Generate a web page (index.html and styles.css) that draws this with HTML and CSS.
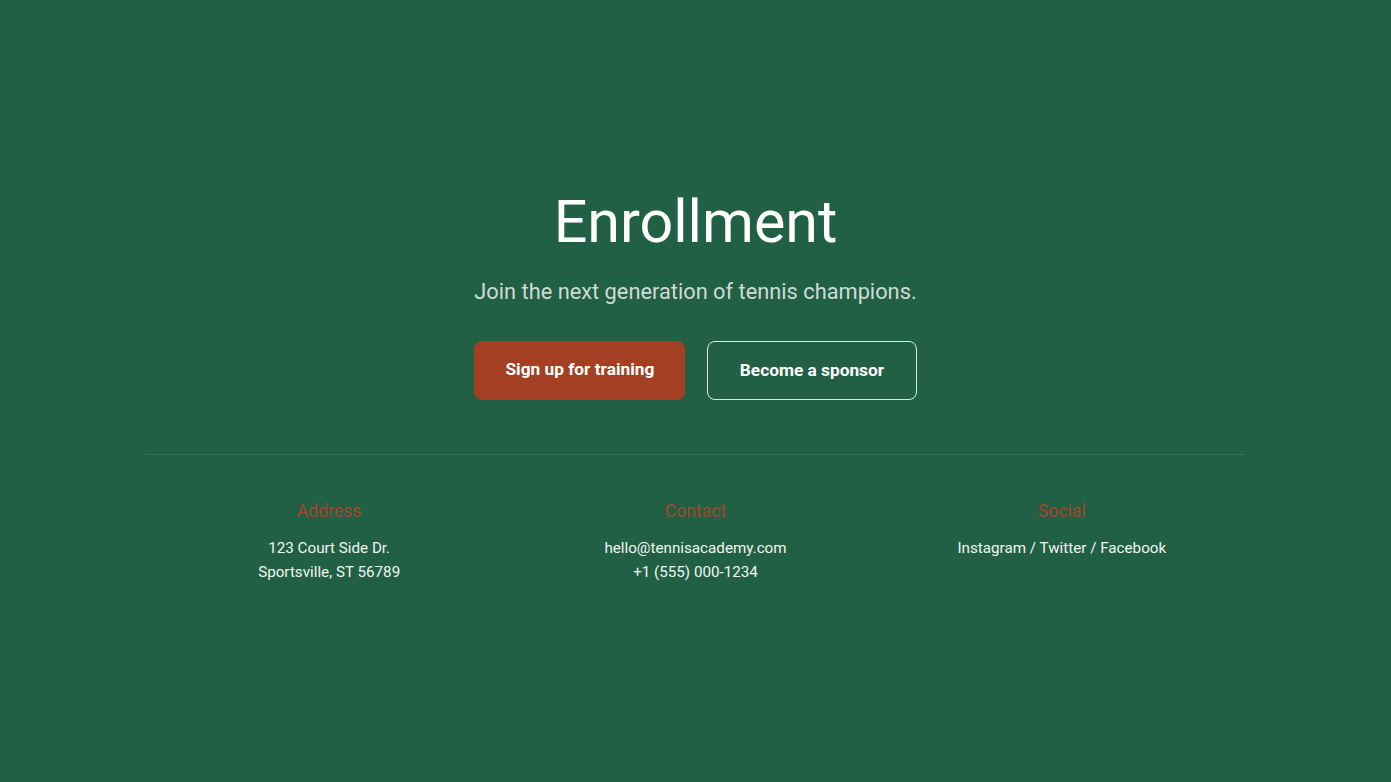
FILE: index.html
```html
<!DOCTYPE html>
<html>
    <head>
        <link rel="stylesheet" href="styles.css">
    </head>
    <body>
        <main class="page">
            <section class="hero">
                <h1 class="hero-title">Enrollment</h1>
                <p class="hero-lead">Join the next generation of tennis champions.</p>
                <div class="hero-actions">
                    <a class="btn btn-primary" href="#">Sign up for training</a>
                    <a class="btn btn-outline" href="#">Become a sponsor</a>
                </div>
            </section>
            <footer class="footer">
                <div class="footer-col">
                    <h3 class="footer-title">Address</h3>
                    <p>123 Court Side Dr.<br>Sportsville, ST 56789</p>
                </div>
                <div class="footer-col">
                    <h3 class="footer-title">Contact</h3>
                    <p>hello@tennisacademy.com<br>+1 (555) 000-1234</p>
                </div>
                <div class="footer-col">
                    <h3 class="footer-title">Social</h3>
                    <p>Instagram / Twitter / Facebook</p>
                </div>
            </footer>
        </main>
    </body>
</html>
```

FILE: styles.css
```css
*{
    box-sizing: border-box;
    margin: 0;
    padding: 0;
}
body{
    background-color: #216045;
    color: #ffffff;
    font-family: Roboto, "Liberation Sans", sans-serif;
    min-height: 100vh;
}
.page{
    min-height: 100vh;
    display: flex;
    flex-direction: column;
    justify-content: center;
    align-items: center;
    padding: 0 146px 16px;
}
.hero{
    display: flex;
    flex-direction: column;
    align-items: center;
    text-align: center;
    width: 100%;
    padding-bottom: 54px;
    border-bottom: 1px solid rgba(255, 255, 255, 0.1);
}
.hero-title{
    font-size: 59.2px;
    font-weight: 400;
    line-height: 77px;
    margin-bottom: 17px;
}
.hero-lead{
    font-size: 21.8px;
    line-height: 30px;
    color: rgba(255, 255, 255, 0.78);
    margin-bottom: 34px;
}
.hero-actions{
    display: flex;
    gap: 22px;
}
a{
    text-decoration: none;
    color: inherit;
}
.btn{
    display: inline-flex;
    align-items: center;
    justify-content: center;
    height: 59px;
    padding: 0 30px;
    border-radius: 8px;
    font-size: 17.3px;
    font-weight: 700;
    white-space: nowrap;
}
.btn-primary{
    background-color: #a33f22;
    border: 1px solid #a33f22;
    padding-bottom: 2px;
}
.btn-outline{
    border: 1px solid rgba(255, 255, 255, 0.85);
    padding: 0 31.5px;
}
.footer{
    width: 100%;
    display: grid;
    grid-template-columns: repeat(3, 1fr);
    padding-top: 46px;
    text-align: center;
}
.footer-title{
    font-size: 17.6px;
    font-weight: 400;
    color: #a8452a;
    line-height: 20px;
    margin-bottom: 15px;
}
.footer-col p{
    font-size: 15.2px;
    line-height: 24px;
    color: #f2f5f3;
}
```
